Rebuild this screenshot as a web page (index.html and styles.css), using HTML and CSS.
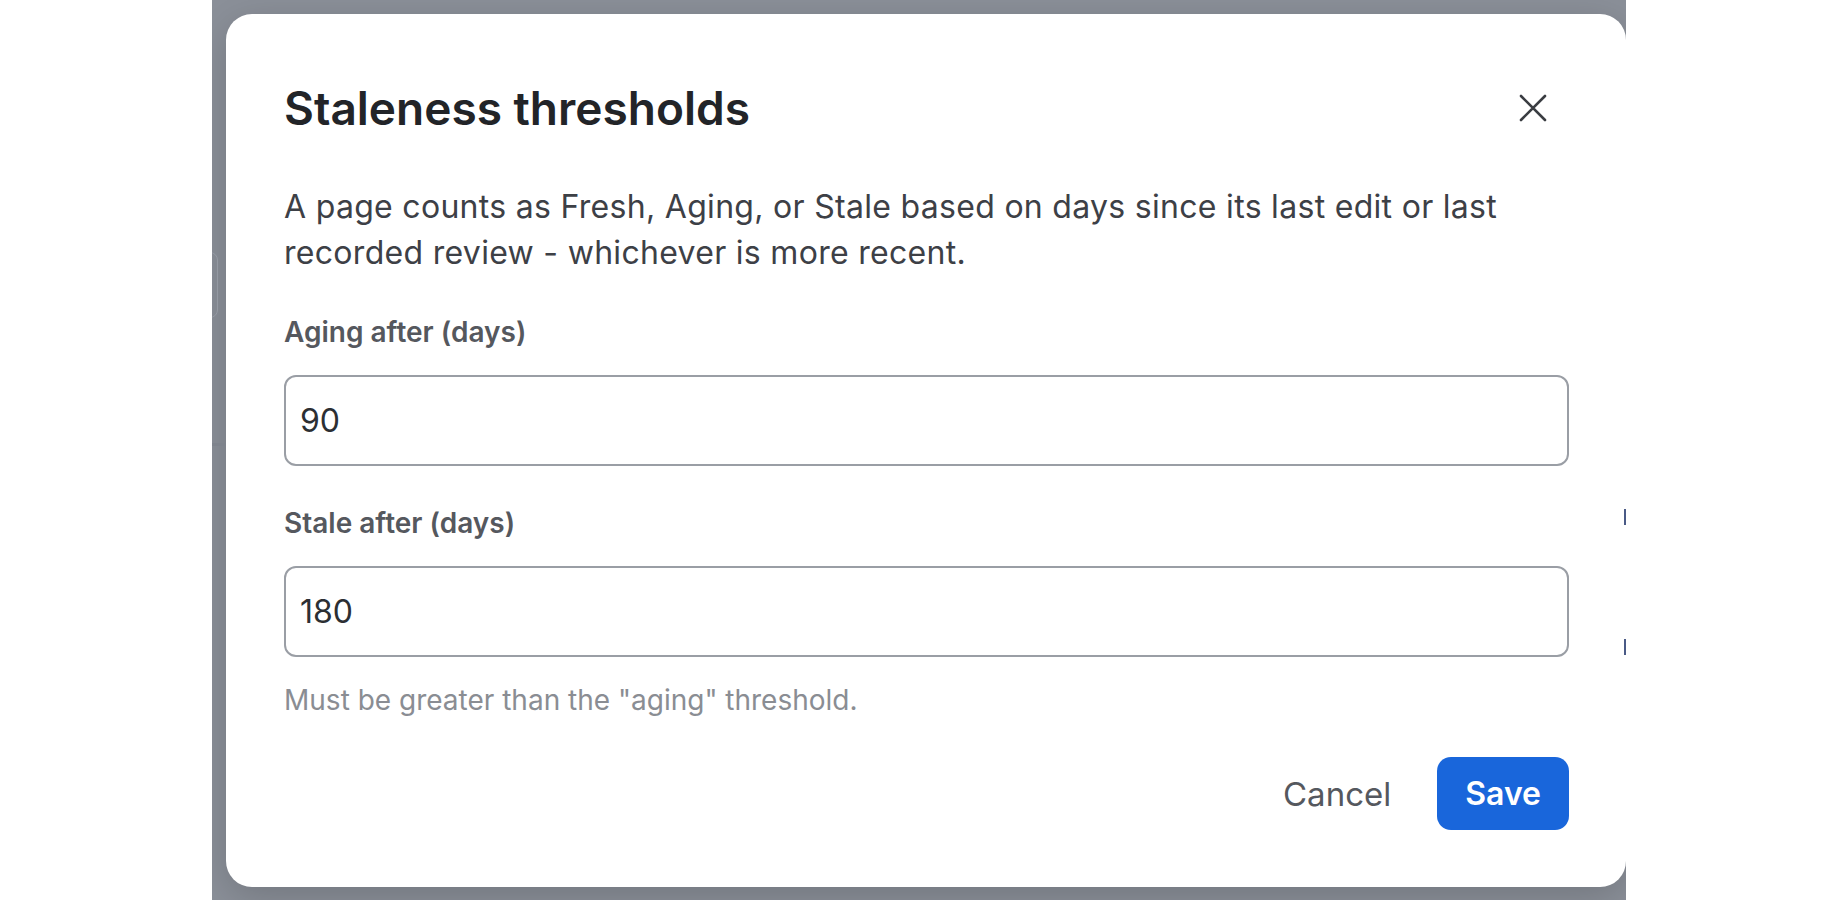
FILE: index.html
```html
<!DOCTYPE html>
<html lang="en">
<head>
    <meta charset="UTF-8">
    <meta name="viewport" content="width=device-width, initial-scale=1.0">
    <title>Staleness thresholds</title>
    <link rel="stylesheet" href="styles.css">
</head>
<body>
    <div class="app">
        <div class="behind behind-pill"></div>
        <div class="behind behind-rule"></div>
        <div class="behind behind-mark mark-a"></div>
        <div class="behind behind-mark mark-b"></div>

        <div class="modal" role="dialog" aria-labelledby="modalTitle">
            <div class="modal-header">
                <h2 id="modalTitle">Staleness thresholds</h2>
                <button class="close-btn" aria-label="Close">
                    <svg width="28" height="28" viewBox="0 0 28 28" fill="none">
                        <path d="M2 2 L26 26 M26 2 L2 26" stroke="#3a3d42" stroke-width="2.6" stroke-linecap="round"/>
                    </svg>
                </button>
            </div>

            <p class="intro">A page counts as Fresh, Aging, or Stale based on days since its last edit or last recorded review - whichever is more recent.</p>

            <label class="field-label" for="agingDays">Aging after (days)</label>
            <input class="field-input" id="agingDays" type="text" value="90">

            <label class="field-label second" for="staleDays">Stale after (days)</label>
            <input class="field-input" id="staleDays" type="text" value="180">

            <div class="hint">Must be greater than the "aging" threshold.</div>

            <div class="actions">
                <button class="btn-cancel">Cancel</button>
                <button class="btn-save">Save</button>
            </div>
        </div>
    </div>
</body>
</html>
```

FILE: styles.css
```css
:root {
    --backdrop: #8b9099;
    --primary-color: #1966db;
    --text-color: #222428;
    --muted: #55585e;
    --hint: #8a8d93;
}
body {
    margin: 0;
    background-color: #ffffff;
    font-family: Inter, 'Noto Sans', sans-serif;
    color: var(--text-color);
}
.app {
    position: relative;
    width: 1414px;
    height: 900px;
    margin-left: 212px;
    padding: 14px 0 0 14px;
    box-sizing: border-box;
    background-color: var(--backdrop);
    overflow: hidden;
}
.behind {
    position: absolute;
}
.behind-pill {
    left: -12px;
    top: 252px;
    width: 16px;
    height: 64px;
    border: 1px solid #9499a2;
    border-radius: 8px;
}
.behind-rule {
    left: 0;
    top: 443px;
    width: 14px;
    height: 3px;
    background-color: #7e838c;
}
.behind-mark {
    right: 0;
    width: 2px;
    height: 16px;
    background-color: #4a5a86;
}
.mark-a { top: 509px; }
.mark-b { top: 639px; }
.modal {
    width: 1400px;
    height: 873px;
    box-sizing: border-box;
    padding: 65px 57px 0 58px;
    background-color: #ffffff;
    border-radius: 26px;
    box-shadow: 0 10px 40px rgba(0, 0, 0, 0.18);
}
.modal-header {
    display: flex;
    justify-content: space-between;
    align-items: center;
    height: 58px;
}
.modal-header h2 {
    margin: 0;
    font-size: 46px;
    line-height: 58px;
    font-weight: 600;
    color: var(--text-color);
}
.close-btn {
    width: 28px;
    height: 28px;
    padding: 0;
    margin-right: 22px;
    border: none;
    background: none;
    cursor: pointer;
}
.intro {
    margin: 47px 0 0;
    font-size: 32px;
    line-height: 46px;
    letter-spacing: 0.3px;
    color: #3d4046;
}
.field-label {
    display: block;
    margin-top: 39px;
    font-size: 28px;
    line-height: 34px;
    font-weight: 600;
    color: var(--muted);
}
.field-label.second {
    margin-top: 40px;
}
.field-input {
    display: block;
    width: 100%;
    height: 91px;
    margin-top: 26px;
    padding: 0 14px;
    box-sizing: border-box;
    border: 2px solid #9a9ea5;
    border-radius: 12px;
    font-family: inherit;
    font-size: 32px;
    color: #2c2f33;
    outline: none;
}
.hint {
    margin-top: 26px;
    font-size: 28px;
    line-height: 34px;
    color: var(--hint);
}
.actions {
    display: flex;
    justify-content: flex-end;
    align-items: center;
    gap: 24px;
    margin-top: 40px;
}
button {
    font-family: inherit;
    cursor: pointer;
}
.btn-cancel {
    height: 73px;
    padding: 0 22px;
    border: none;
    background: none;
    font-size: 33px;
    color: var(--muted);
}
.btn-save {
    height: 73px;
    padding: 0 28px;
    border: none;
    border-radius: 14px;
    background-color: var(--primary-color);
    font-size: 32px;
    font-weight: 600;
    color: #ffffff;
}
```
